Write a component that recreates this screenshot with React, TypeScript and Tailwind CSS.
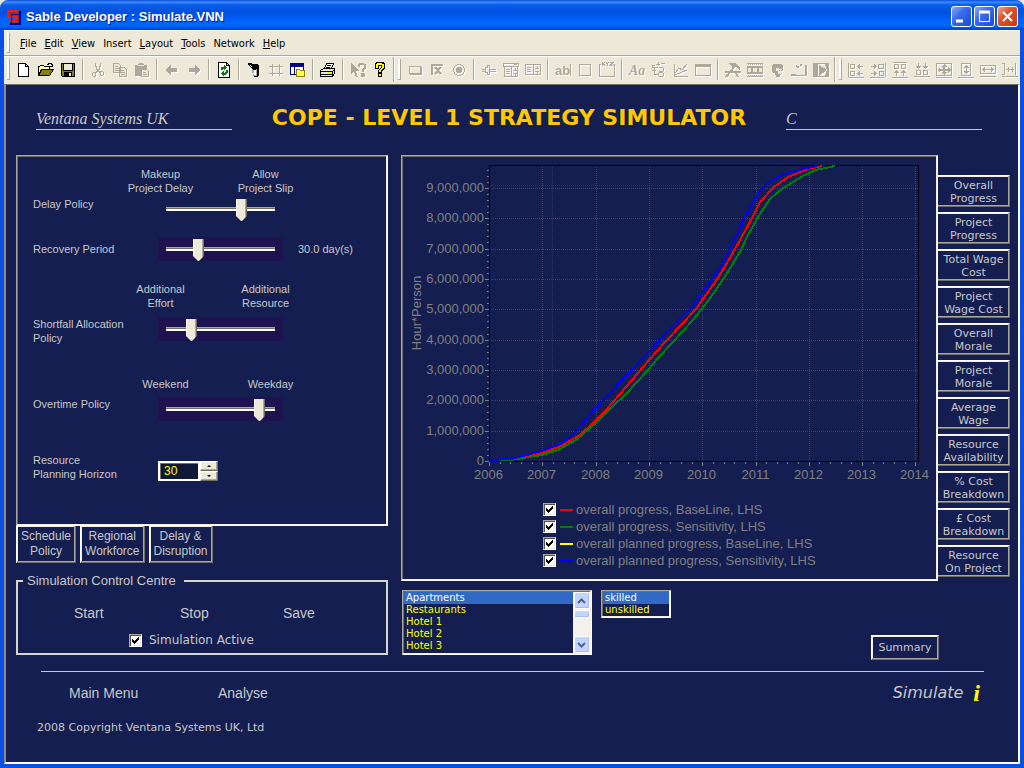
import { useState } from 'react';
import type { ReactNode } from 'react';
import clsx from 'clsx';

const SUNKEN =
  'border border-t-[#aca899] border-l-[#aca899] border-b-white border-r-white shadow-[inset_-1px_-1px_0_#f4f1e4,inset_1px_1px_0_#716f64]';
const RAISED =
  'border border-t-white border-l-white border-b-[#716f64] border-r-[#716f64] shadow-[inset_-1px_-1px_0_#aca899,inset_1px_1px_0_#f4f1e4]';

const VERDANA = "font-['DejaVu_Sans',Verdana,sans-serif]";

const menus = [
  ['', 'F', 'ile'],
  ['', 'E', 'dit'],
  ['', 'V', 'iew'],
  ['Insert', '', ''],
  ['', 'L', 'ayout'],
  ['', 'T', 'ools'],
  ['Network', '', ''],
  ['', 'H', 'elp'],
];

const sideTabs = [
  ['Overall', 'Progress'],
  ['Project', 'Progress'],
  ['Total Wage', 'Cost'],
  ['Project', 'Wage Cost'],
  ['Overall', 'Morale'],
  ['Project', 'Morale'],
  ['Average', 'Wage'],
  ['Resource', 'Availability'],
  ['% Cost', 'Breakdown'],
  ['£ Cost', 'Breakdown'],
  ['Resource', 'On Project'],
];

const G = '#aca899';

type Tool = { name: string; art: ReactNode; on?: boolean };

const fileTools: (Tool | null)[] = [
  {
    name: 'New',
    on: true,
    art: <path d="M2.5 1.5h7l3 3v10h-10zM9.5 1.5v3h3" fill="#fff" stroke="#000" />,
  },
  {
    name: 'Open',
    on: true,
    art: (
      <>
        <path d="M.5 13.5v-9h1l1-1h3l1 1h5v3" fill="#ffff9c" stroke="#000" />
        <path d="M.5 13.5l3-6h12l-4 6z" fill="#84820a" stroke="#000" />
        <path d="M9 2.5h1v-1h3v1h1v2M12 4.5h3M14.5 2v3" fill="none" stroke="#000" />
      </>
    ),
  },
  {
    name: 'Save',
    on: true,
    art: (
      <>
        <path d="M1.500 1.500h13v13h-12l-1-1z" fill="#84820a" stroke="#000" />
        <path d="M4 2h8v6H4z" fill="#ece9d8" />
        <path d="M3.500 2v6.500h9V2" fill="none" stroke="#000" />
        <path d="M4 10h8v4H4z" fill="#000" />
        <path d="M9 11h2v3H9z" fill="#ece9d8" />
      </>
    ),
  },
  null,
  {
    name: 'Cut',
    art: (
      <path
        d="M5.500 1v3l1 1v2l1 1v2M10.500 1v3l-1 1v2l-1 1v2M7.500 9.500l-2 1M8.500 9.500l2 1M3.500 10.500h2v4h-2l-1-1v-2zM10.500 9.500h2l1 1v2l-1 1h-2z"
        fill="none"
        stroke={G}
      />
    ),
  },
  {
    name: 'Copy',
    art: (
      <path
        d="M1.500 1.500h5l2 2v7h-7zM3 4.500h3M3 6.500h4M3 8.500h4M7.500 5.500h5l2 2v7h-7zM9 8.500h3M9 10.500h4M9 12.500h4"
        fill="#ece9d8"
        stroke={G}
      />
    ),
  },
  {
    name: 'Paste',
    art: (
      <>
        <path d="M1 3h3l1-2h4l1 2h3v11H1z" fill={G} />
        <path d="M4 3.500h6" stroke="#ece9d8" />
        <path d="M7.500 7.500h5l2 2v5h-7zM9 10.500h3M9 12.500h4" fill="#ece9d8" stroke={G} />
      </>
    ),
  },
  null,
  { name: 'Back', art: <path d="M1 8l6-5v3h6v4H7v3z" fill={G} /> },
  { name: 'Forward', art: <path d="M15 8L9 3v3H3v4h6v3z" fill={G} /> },
  null,
  {
    name: 'Refresh',
    on: true,
    art: (
      <>
        <path d="M2.500.5h8l3 3v12h-11zM10.500.5v3h3" fill="#fff" stroke="#000" />
        <path d="M5.500 8V6.500l1-1h2M10.500 8v2.500l-1 1h-2" fill="none" stroke="#008000" strokeWidth="2" />
        <path d="M8 3v5l3-2.500zM8 9v5l-3-2.500z" fill="#008000" />
      </>
    ),
  },
  null,
  {
    name: 'Brush',
    on: true,
    art: (
      <>
        <path d="M6 4h6v10H7l1-3H6z" fill="#aca899" />
        <path d="M8 7h2v6H8z" fill="#fff" />
        <path d="M2 1h3l1 1h6v1l1 1v10l-2 1H8v-1h3V6L9 8H8L3 4z" fill="#000" />
        <path d="M4 3h1v1h1v1H5V4H4z" fill="#fff" />
      </>
    ),
  },
  {
    name: 'Grid',
    art: <path d="M4.500 2v12M11.500 2v12M1 4.500h14M1 11.500h14" fill="none" stroke={G} />,
  },
  {
    name: 'Windows',
    on: true,
    art: (
      <>
        <path d="M.5 1.500h13v11H.5z" fill="#fff" stroke="#000084" />
        <path d="M0 1h14v4H0zM4 5h1v8H4z" fill="#000084" />
        <path d="M6.500 14.500v-7h3l1 1h4v6z" fill="#ffff4a" stroke="#84820a" />
      </>
    ),
  },
  null,
  {
    name: 'Print',
    on: true,
    art: (
      <>
        <path d="M4.500 6.500l2-5h7l-2 5z" fill="#fff" stroke="#000" />
        <path d="M.5 8.500l3-2h11v5l-2 3H.5z" fill="#ece9d8" stroke="#000" />
        <path d="M1 9.500h11.500l2-2M1 12.500h12M7 3.500h4M6 5.500h4M12.500 9v5" fill="none" stroke="#000" />
        <path d="M8 10h3v2H8z" fill="#ffef00" />
      </>
    ),
  },
  null,
  {
    name: 'Context help',
    art: (
      <>
        <path d="M1 1v11l3-2 2 5h2L6 9h3z" fill={G} />
        <path d="M9 5V3l1-1h3l2 1v3l-2 2v2M12 12h2v2h-2z" fill="none" stroke={G} strokeWidth="2" />
      </>
    ),
  },
  {
    name: 'Help',
    on: true,
    art: (
      <>
        <path d="M4 0h7l2 2v5l-3 2v2H6V8l3-2V4H7v3H3V1z" fill="#000" />
        <path d="M4 2h1V1h5v1h2v4h-1v1h-1v1H9v2H7V8h1V7h1V6h1V3H6v3H4z" fill="#ffff00" />
        <path d="M6 11h4v4H6z" fill="#000" />
        <path d="M7 12h2v2H7z" fill="#ffff00" />
      </>
    ),
  },
];

const controlTools: (Tool | null)[] = [
  {
    name: 'Button',
    art: <path d="M2.500 4.500h11v7h-11zM3 12.500h11.500V5" fill="none" stroke={G} />,
  },
  {
    name: 'Check',
    art: (
      <>
        <path d="M2 2h12v2H4v9H2z" fill={G} />
        <path d="M6 5l6 7M12 5l-6 7" stroke={G} strokeWidth="2" />
      </>
    ),
  },
  {
    name: 'Radio',
    art: (
      <>
        <circle cx="8" cy="8" r="5.500" fill="none" stroke={G} />
        <circle cx="8" cy="8" r="3" fill={G} />
      </>
    ),
  },
  null,
  {
    name: 'Slider',
    art: <path d="M1 7.500h3M1 9.500h3M9 7.500h6M9 9.500h6M4.500 5.500h2v-2h2v9h-2v-2h-2z" fill="none" stroke={G} />,
  },
  {
    name: 'Combo',
    art: (
      <path
        d="M.5 1.500h15v3H.5zM1.500 4.500v10h13v-10M8.500 4v10M3 7.500h4M3 9.500h4M3 11.500h4M10 8.500h4M10 11.500h4M12 6v3M12 10.500v3M11 2.500h3"
        fill="none"
        stroke={G}
      />
    ),
  },
  {
    name: 'List',
    art: (
      <path
        d="M.5 2.500h15v10H.5zM8.500 2v10M2 5.500h4M2 7.500h4M2 9.500h4M10 6.500h4M10 9.500h4M12 4v3M12 8.500v3"
        fill="none"
        stroke={G}
      />
    ),
  },
  null,
  {
    name: 'Edit box',
    art: (
      <>
        <text x="0" y="13" fontSize="13" fontWeight="bold" fill={G} fontFamily="Liberation Sans">
          ab
        </text>
        <path d="M15.500 2v12" stroke={G} />
      </>
    ),
  },
  { name: 'Rectangle', art: <path d="M2.500 2.500h11v11h-11z" fill="none" stroke={G} /> },
  {
    name: 'Group',
    art: (
      <>
        <path d="M2 2.500H.5v12h15v-12H14" fill="none" stroke={G} />
        <path
          d="M3 0l3 4M6 0L3 4M7 0l1.500 2L10 0M8.500 2v2M11 .5h3l-3 3h3"
          fill="none"
          stroke={G}
        />
      </>
    ),
  },
  null,
  {
    name: 'Text',
    art: (
      <text x="0" y="13" fontSize="14" fontWeight="bold" fontStyle="italic" fill={G} fontFamily="Liberation Serif">
        Aa
      </text>
    ),
  },
  {
    name: 'Model',
    art: (
      <path
        d="M5 2.500h4M7.500 0v4M10 1.500h4M3.500 3l-2 1v2M1.500 5.500h5M1 8.500h4M3.500 6v6h4M7.500 5.500h4l1 1v2l-1 1h-4M8.500 10.500h3l1 1v2l-1 1h-3l-1-1v-2z"
        fill="none"
        stroke={G}
      />
    ),
  },
  {
    name: 'Graph',
    art: <path d="M1.500 2v12.500H15M2 11l4-5 3 2 5-6M2 13l12-5" fill="none" stroke={G} />,
  },
  {
    name: 'Frame',
    art: (
      <>
        <path d="M.5 2.500h15v11H.5z" fill="none" stroke={G} />
        <path d="M0 2h16v3H0z" fill={G} />
      </>
    ),
  },
  null,
  {
    name: 'Tools',
    art: (
      <>
        <path d="M4 1h6l2 1 3 4v2l-2-1-2-2-2 1-4-3z" fill={G} />
        <path d="M9 5L2 14M0 9.500h16M10 9l3 6M3 12l-2 3" fill="none" stroke={G} strokeWidth="2" />
      </>
    ),
  },
  {
    name: 'Film',
    art: (
      <>
        <path d="M0 1h16v1H0zM0 4h16v8H0zM0 14h16v1H0z" fill={G} />
        <path d="M1 2.500h1m1 0h1m1 0h1m1 0h1m1 0h1m1 0h1m1 0h1m1 0h1M1 13.500h1m1 0h1m1 0h1m1 0h1m1 0h1m1 0h1m1 0h1m1 0h1" stroke={G} />
        <path d="M1 6h3v4H1zM6 6h4v4H6zM12 6h3v4h-3z" fill="#ece9d8" />
      </>
    ),
  },
  {
    name: 'Person',
    art: (
      <>
        <path d="M3 3l2-1h7l2 2v4l-1 1v2l-2 2v2H7l-1-4H4L3 9z" fill={G} />
        <path d="M7 6h3v1h3v3l-2 2H9V9H7z" fill="#ece9d8" />
        <path d="M10.500 8v1M12.500 8v1" stroke={G} />
      </>
    ),
  },
  {
    name: 'Path',
    art: (
      <path d="M0 12h5v2H0zM5 13h11v1H5zM14 3h2v11h-2zM5 3h1v2H5zM6 4h2v2H6zM9 2h2v2H9z" fill={G} />
    ),
  },
  {
    name: 'Play',
    art: (
      <>
        <path d="M.5 1.500h15v13H.5z" fill="none" stroke={G} />
        <path d="M1 2h4v12H1zM6 3l8 5-8 6zM12 2h3v12h-3l2-6z" fill={G} />
      </>
    ),
  },
];

const alignTools: Tool[] = [
  {
    name: 'Align left',
    art: <path d="M.5 1v14M2.500 2.500h4v4h-4zM2.500 9.500h4v4h-4zM9 4.500h6M10.500 3v3M11.500 2v5M9 11.500h6M10.500 10v3M11.500 9v5M1 15.500h15" fill="none" stroke={G} />,
  },
  {
    name: 'Align right',
    art: <path d="M15.500 1v14M8.500 2.500h5v4h-5zM9.500 9.500h4v4h-4zM1 4.500h6M5.500 3v3M4.500 2v5M1 11.500h6M5.500 10v3M4.500 9v5M0 15.500h15" fill="none" stroke={G} />,
  },
  {
    name: 'Align top',
    art: <path d="M1 .5h14M2.500 2.500h4v4h-4zM9.500 2.500h4v4h-4zM4.500 8v6M2 10.500h5M3 9.500h3M11.500 8v6M9 10.500h5M10 9.500h3M0 15.500h16" fill="none" stroke={G} />,
  },
  {
    name: 'Align bottom',
    art: <path d="M0 14.500h16M2.500 8.500h4v4h-4zM9.500 8.500h4v4h-4zM4.500 1v6M2 4.500h5M3 5.500h3M11.500 1v6M9 4.500h5M10 5.500h3" fill="none" stroke={G} />,
  },
  {
    name: 'Same size',
    art: (
      <>
        <path d="M.5 1.500h15v12H.5z" fill="none" stroke={G} />
        <path d="M8 2l3 3H9v2h3V5l3 3-3 3V9H9v1h2l-3 3-3-3h2V9H4v2L1 8l3-3v2h3V5H5z" fill={G} />
        <path d="M0 15.500h16" stroke={G} />
      </>
    ),
  },
  {
    name: 'Same height',
    art: <path d="M3.500 1.500h9v12h-9zM8.500 3v9M6 5.500h5M7 4.500h3M6 9.500h5M7 10.500h3M0 15.500h16" fill="none" stroke={G} />,
  },
  {
    name: 'Same width',
    art: <path d="M.5 3.500h15v8H.5zM2 7.500h12M4.500 5v5M3.500 6v3M11.500 5v5M12.500 6v3M0 14.500h16" fill="none" stroke={G} />,
  },
  {
    name: 'Space across',
    art: <path d="M0 1.500h2.500v11H0M4 7.500h8M6.500 5v5M10.500 5v5M13.500 1v12M0 14.500h16" fill="none" stroke={G} />,
  },
];

const ToolGroup = ({ tools }: { tools: (Tool | null)[] }) => (
  <div className="flex items-center h-full shrink-0">
    <span className="w-[3px] h-[21px] mx-[3px] border-r border-[#aca899] border-b bg-white shrink-0" />
    {tools.map((tool, i) =>
      tool ? (
        <button key={tool.name} type="button" aria-label={tool.name} className="w-[22px] h-6 grid place-items-center shrink-0">
          <svg
            viewBox="0 0 16 16"
            shapeRendering="crispEdges"
            className={clsx('w-4 h-4 overflow-visible', !tool.on && 'drop-shadow-[1px_1px_0_#fff]')}
          >
            {tool.art}
          </svg>
        </button>
      ) : (
        <span key={i} className="w-2 flex justify-center shrink-0">
          <span className="w-[2px] h-[21px] bg-[#aca899] border-r border-white" />
        </span>
      ),
    )}
  </div>
);

const TickBox = ({ id }: { id: string }) => {
  const [checked, setChecked] = useState(true);
  return (
    <span className="relative w-[13px] h-[13px] shrink-0">
      <input
        id={id}
        type="checkbox"
        checked={checked}
        onChange={(e) => setChecked(e.target.checked)}
        className="peer appearance-none block w-[13px] h-[13px] bg-white border border-t-[#aca899] border-l-[#aca899] border-b-white border-r-white shadow-[inset_1px_1px_0_#55534a,inset_-1px_-1px_0_#ece9d8]"
      />
      <svg
        viewBox="0 0 13 13"
        shapeRendering="crispEdges"
        className="absolute inset-0 w-[13px] h-[13px] pointer-events-none hidden peer-checked:block"
      >
        <path d="M3 5h1v1h1v1h1v-1h1v-1h1v-1h1v-1h1v3h-1v1h-1v1h-1v1h-1v1h-1v-1h-1v-1h-1z" fill="#000" />
      </svg>
    </span>
  );
};

const Slider = ({ label, start, plain }: { label: string; start: number; plain?: boolean }) => {
  const [value, setValue] = useState(start);
  return (
    <div className={clsx('w-[125px] h-6 px-2', !plain && 'bg-[#1f1250]')}>
      <input
        type="range"
        aria-label={label}
        min={0}
        max={98}
        value={value}
        onChange={(e) => setValue(Number(e.target.value))}
        className="appearance-none block w-full h-6 bg-transparent [&::-webkit-slider-runnable-track]:h-1 [&::-webkit-slider-runnable-track]:bg-[linear-gradient(#aca899_0_1px,#716f64_1px_2px,#ffffff_2px_4px)] [&::-webkit-slider-thumb]:appearance-none [&::-webkit-slider-thumb]:w-[11px] [&::-webkit-slider-thumb]:h-[22px] [&::-webkit-slider-thumb]:-mt-2 [&::-webkit-slider-thumb]:bg-[linear-gradient(90deg,#ffffff_0_1px,#ece9d8_1px_9px,#aca899_9px_10px,#716f64_10px_11px)] [&::-webkit-slider-thumb]:[clip-path:polygon(0_0,100%_0,100%_17px,6px_100%,5px_100%,0_17px)]"
      />
    </div>
  );
};

const Captions = ({ left, right, className }: { left: ReactNode; right: ReactNode; className?: string }) => (
  <div className={clsx('flex text-center', className)}>
    <span className="w-[105px]">{left}</span>
    <span className="w-[105px]">{right}</span>
  </div>
);

const PolicyPanel = () => {
  const [horizon, setHorizon] = useState(30);
  const row = 'grid grid-cols-[125px_125px_1fr]';
  return (
    <section className={clsx('px-4 pt-[11px] pb-11 text-[11px] leading-[14px]', SUNKEN)}>
      <Captions className="ml-[75px]" left={<>Makeup<br />Project Delay</>} right={<>Allow<br />Project Slip</>} />
      <div className={clsx(row, 'mt-0.5 items-start')}>
        <span>Delay Policy</span>
        <Slider label="Delay Policy" start={70} plain />
      </div>
      <div className={clsx(row, 'mt-4 items-center')}>
        <span>Recovery Period</span>
        <Slider label="Recovery Period" start={27} />
        <span className="pl-[15px]">30.0 day(s)</span>
      </div>
      <Captions className="ml-[75px] mt-[21px]" left={<>Additional<br />Effort</>} right={<>Additional<br />Resource</>} />
      <div className={clsx(row, 'mt-[7px] items-start')}>
        <span>Shortfall Allocation<br />Policy</span>
        <Slider label="Shortfall Allocation Policy" start={20} />
      </div>
      <Captions className="ml-20 mt-8" left="Weekend" right="Weekday" />
      <div className={clsx(row, 'mt-1.5 items-start')}>
        <span>Overtime Policy</span>
        <Slider label="Overtime Policy" start={88} />
      </div>
      <div className={clsx(row, 'mt-8 items-end')}>
        <label htmlFor="horizon">Resource<br />Planning Horizon</label>
        <div className="flex h-5">
          <input
            id="horizon"
            value={horizon}
            onChange={(e) => setHorizon(Number(e.target.value) || 0)}
            className="w-[42px] h-5 pl-1 text-xs text-[#ffff00] bg-[#101838] border-2 border-white shadow-[inset_1px_1px_0_#716f64] outline-none"
          />
          <div className="flex flex-col w-[18px]">
            <button type="button" aria-label="More" onClick={() => setHorizon(horizon + 1)} className={clsx('flex-1 bg-[#ece9d8] grid place-items-center', RAISED)}>
              <svg viewBox="0 0 4 2" className="w-1 h-[2px]"><path d="M0 2h4L2 0z" /></svg>
            </button>
            <button type="button" aria-label="Less" onClick={() => setHorizon(horizon - 1)} className={clsx('flex-1 bg-[#ece9d8] grid place-items-center', RAISED)}>
              <svg viewBox="0 0 4 2" className="w-1 h-[2px]"><path d="M0 0h4L2 2z" /></svg>
            </button>
          </div>
        </div>
      </div>
    </section>
  );
};

// plot area of the chart, in the svg's own units
const X0 = 86;
const X1 = 515;
const Y0 = 304;
const Y1 = 8;
const YEAR = 53.3;
const MILLION = 30.35;

const series = [
  {
    color: '#008000',
    points:
      '87,303 107,303 139,298 157,292 173,283 193,266 208,251 223,237 245,213 255,201 270,185 290,163 305,144 315,130 326,113 337,95 345,78 357,57 367,42 380,31 400,19 413,13 432,9',
  },
  {
    color: '#ff0000',
    points:
      '87,303 107,302 139,296 158,289 177,278 193,263 203,253 223,230 246,203 263,184 279,167 293,152 300,142 315,121 328,99 342,74 350,59 357,45 371,30 385,20 405,12 419,9',
  },
  {
    color: '#0000ff',
    points:
      '87,303 108,302 139,294 157,287 167,280 177,270 192,252 220,222 246,195 262,177 278,161 290,149 299,136 316,113 327,91 335,75 342,60 357,34 367,24 382,17 400,12 414,9',
  },
];

const legend = [
  { color: 'bg-[#ff0000]', text: 'overall progress, BaseLine, LHS' },
  { color: 'bg-[#008000]', text: 'overall progress, Sensitivity, LHS' },
  { color: 'bg-[#ffff00]', text: 'overall planned progress, BaseLine, LHS' },
  { color: 'bg-[#0000ff]', text: 'overall planned progress, Sensitivity, LHS' },
];

const Chart = () => {
  const yTicks = Array.from({ length: 10 }, (_, i) => i);
  const xTicks = Array.from({ length: 9 }, (_, i) => i);
  const xAt = (n: number) => Math.round(X0 + n * YEAR) + 0.5;
  const yAt = (n: number) => Math.round(Y0 - n * MILLION) + 0.5;
  return (
    <section className={clsx('flex-1 p-px', SUNKEN)}>
      <svg viewBox="0 0 533 344" className="block w-full" fontSize="13" fill="#808080" fontFamily="Liberation Sans">
        <g stroke="#2c40b0" strokeDasharray="1 1" shapeRendering="crispEdges">
          {xTicks.slice(1).map((n) => (
            <path key={n} d={`M${xAt(n)} ${Y1}V${Y0}`} />
          ))}
          {yTicks.slice(1).map((n) => (
            <path key={n} d={`M${X0} ${yAt(n)}H${X1}`} />
          ))}
          <path d={`M149.500 ${Y1}V${Y0}M${X0} 28.500H${X1}`} opacity="0.6" />
        </g>
        <g stroke="#808080" shapeRendering="crispEdges">
          {yTicks.map((n) => (
            <path key={n} d={`M${X0 - 4} ${yAt(n)}H${X0}`} />
          ))}
          {Array.from({ length: 49 }, (_, i) => (
            <path key={i} d={`M${X0 - 2} ${yAt(i / 5)}H${X0}`} />
          ))}
          {xTicks.map((n) => (
            <path key={n} d={`M${xAt(n)} ${Y0}V${Y0 + 5}`} />
          ))}
          {Array.from({ length: 41 }, (_, i) => (
            <path key={i} d={`M${xAt(i / 5)} ${Y0}V${Y0 + 3}`} />
          ))}
        </g>
        <path d={`M${X0}.5 ${Y1}.5H${X1}.5V${Y0}.5H${X0}.5z`} fill="none" stroke="#000" shapeRendering="crispEdges" />
        {series.map((s) => (
          <polyline key={s.color} points={s.points} fill="none" stroke={s.color} strokeWidth="2" shapeRendering="crispEdges" />
        ))}
        {yTicks.map((n) => (
          <text key={n} x={X0 - 5} y={yAt(n) + 3} textAnchor="end">
            {n ? `${n},000,000` : '0'}
          </text>
        ))}
        {xTicks.map((n) => (
          <text key={n} x={xAt(n) - 1} y={Y0 + 18} textAnchor="middle">
            {2006 + n}
          </text>
        ))}
        <text transform="translate(18 156) rotate(-90)" textAnchor="middle">
          Hour*Person
        </text>
      </svg>
      <ul className="pl-[140px] pb-[10px] text-[13px] leading-[17px] text-[#808080]">
        {legend.map((l, i) => (
          <li key={l.text} className="flex items-center h-[17px]">
            <TickBox id={`series-${i}`} />
            <span className={clsx('w-[13px] h-[2px] ml-1 mr-[3px]', l.color)} />
            <label htmlFor={`series-${i}`} className="whitespace-nowrap">{l.text}</label>
          </li>
        ))}
      </ul>
    </section>
  );
};

const listStyle =
  'block appearance-none outline-none overflow-hidden bg-transparent text-[10px] leading-3 text-[#ffff00] [&::-webkit-scrollbar]:hidden [&>option]:p-0 [&>option]:pl-0.5 [&>option]:min-h-0 [&>option]:h-3 [&>option]:leading-3 [&>option:checked]:bg-[linear-gradient(#316ac5,#316ac5)] [&>option:checked]:[-webkit-text-fill-color:#ffffff]';

const ScrollButton = ({ label, d }: { label: string; d: string }) => (
  <button
    type="button"
    aria-label={label}
    className="w-4 h-[17px] rounded-xs border border-white bg-[#c3d5fd] grid place-items-center shadow-[inset_-1px_-1px_0_#a5bdf0]"
  >
    <svg viewBox="0 0 9 6" className="w-[9px] h-1.5" fill="none" stroke="#4d6185" strokeWidth="2">
      <path d={d} />
    </svg>
  </button>
);

const Lists = () => (
  <div className={clsx('flex items-start mt-[9px] ml-px mr-[71px]', VERDANA)}>
    <div className={clsx('flex w-[190px] h-[65px] p-px', SUNKEN)}>
      <select size={5} defaultValue="Apartments" aria-label="Building" className={clsx('flex-1 h-[61px]', listStyle)}>
        <option>Apartments</option>
        <option>Restaurants</option>
        <option>Hotel 1</option>
        <option>Hotel 2</option>
        <option>Hotel 3</option>
      </select>
      <div className="w-[17px] bg-[#f3f1ec] flex flex-col items-center">
        <ScrollButton label="Scroll up" d="M1 5l3.500-3.500L8 5" />
        <span className="w-4 h-2 mt-px rounded-xs border border-white bg-[#c3d5fd] shadow-[inset_-1px_-1px_0_#a5bdf0]" />
        <span className="flex-1" />
        <ScrollButton label="Scroll down" d="M1 1l3.500 3.500L8 1" />
      </div>
    </div>
    <div className={clsx('w-[70px] h-7 p-px ml-[9px]', SUNKEN)}>
      <select size={2} defaultValue="skilled" aria-label="Skill" className={clsx('w-full h-6', listStyle)}>
        <option>skilled</option>
        <option>unskilled</option>
      </select>
    </div>
    <button type="button" className={clsx('ml-auto mt-[45px] w-[68px] h-[25px] pt-0.5 text-[11px]', RAISED)}>
      Summary
    </button>
  </div>
);

const WindowButton = ({ label, red, children }: { label: string; red?: boolean; children: ReactNode }) => (
  <button
    type="button"
    aria-label={label}
    className={clsx(
      'w-[21px] h-[21px] rounded-[3px] border border-white',
      red
        ? 'bg-[linear-gradient(135deg,#f0a58c,#e0512c_40%,#c23a12)]'
        : 'bg-[linear-gradient(135deg,#8aaaf5,#3a6bea_40%,#1c4cd0)]',
    )}
  >
    <svg viewBox="0 0 19 19" className="block w-full h-full" fill="none" stroke="#fff">
      {children}
    </svg>
  </button>
);

const App = () => {
  return (
    <div className="bg-[#ece9d8] min-h-screen flex flex-col font-['Liberation_Sans',Arial,sans-serif] cursor-default">
      <header className="h-[30px] rounded-t-lg bg-[linear-gradient(#0b48d8_0px,#3a8cff_2px,#0a5ce8_5px,#0050e0_12px,#0060fc_20px,#0066ff_26px,#0040c8_30px)] flex items-center pt-[3px] px-1.5">
        <svg viewBox="0 0 16 16" className="w-4 h-4" shapeRendering="crispEdges">
          <path d="M1 1h12v3H5v2h9v8H3v-3h7V9H1z" fill="#7a3a3a" />
          <path d="M1 1h11v2H3v4h8v6H3v-2h6V9H1z" fill="#ff1414" />
          <path d="M5.500 5.500h9v9h-9z" fill="none" stroke="#1010b8" />
          <path d="M14 2v12M4 14.500h11" fill="none" stroke="#0000a0" strokeWidth="2" />
        </svg>
        <h1 className="ml-1 text-[13px] font-bold text-white [text-shadow:1px_1px_0_#0a1883]">
          Sable Developer : Simulate.VNN
        </h1>
        <div className="ml-auto flex gap-0.5">
          <WindowButton label="Minimise">
            <path d="M4 14h7" strokeWidth="3" />
          </WindowButton>
          <WindowButton label="Maximise">
            <path d="M4.500 5.500h10v9h-10z" />
            <path d="M4 5h11" strokeWidth="3" />
          </WindowButton>
          <WindowButton label="Close" red>
            <path d="M5 5l9 9M14 5l-9 9" strokeWidth="2" />
          </WindowButton>
        </div>
      </header>

      <div className="flex-1 flex flex-col border-4 border-t-0 border-[#0a50e8]">
        <nav className="h-[26px] border-t border-white border-b border-b-[#aca899] flex items-center font-['DejaVu_Sans_Condensed','DejaVu_Sans',Tahoma,sans-serif] text-[11px] text-black">
          <span className="w-[3px] h-5 ml-[3px] mr-[10px] border-r border-b border-[#aca899] bg-white" />
          <div className="flex gap-2 pt-0.5">
            {menus.map(([pre, key, rest]) => (
              <button key={pre + key} type="button">
                {pre}
                <span className="underline">{key}</span>
                {rest}
              </button>
            ))}
          </div>
        </nav>
        <div className="h-[28px] border-t border-white pb-0.5 flex items-center overflow-hidden">
          <ToolGroup tools={fileTools} />
          <span className="w-[2px] h-full ml-0.5 bg-[#aca899] border-r border-white shrink-0" />
          <ToolGroup tools={controlTools} />
          <span className="w-[2px] h-full ml-0.5 bg-[#aca899] border-r border-white shrink-0" />
          <ToolGroup tools={alignTools} />
        </div>

        <main className="flex-1 border-2 border-t-[#716f64] border-t border-l-[#8f8b7d] border-b-white border-r-white bg-[#141e50] text-[#c8c8c8] pl-[10px] pr-2">
          <div className="flex items-end justify-between pt-[21px] pb-[25px] pl-5 pr-7">
            <div className="w-[196px] border-b border-[#c0c8e0] font-['Liberation_Serif',serif] italic text-base leading-5">
              Ventana Systems UK
            </div>
            <h2 className={clsx('text-[22px] leading-6 font-bold text-[#ffc800] whitespace-nowrap', VERDANA)}>
              COPE - LEVEL 1 STRATEGY SIMULATOR
            </h2>
            <div className="w-[196px] border-b border-[#c0c8e0] font-['Liberation_Serif',serif] italic text-base leading-5">
              C
            </div>
          </div>

          <div className="flex items-start gap-[13px]">
            <div className="w-[372px] shrink-0">
              <PolicyPanel />
              <div className="flex gap-1 text-xs leading-[15px]">
                {[
                  ['Schedule', 'Policy'],
                  ['Regional', 'Workforce'],
                  ['Delay &', 'Disruption'],
                ].map(([a, b]) => (
                  <button key={a} type="button" className={clsx('px-1 pt-[3px] pb-[3px] border-t-0', RAISED)}>
                    {a}
                    <br />
                    {b}
                  </button>
                ))}
              </div>
              <fieldset className="mt-[10px] border-2 border-[#d8d6cc] pb-[5px]">
                <legend className="ml-[5px] pl-1 pr-2 text-[13px] leading-4">Simulation Control Centre</legend>
                <div className="grid grid-cols-[106px_103px_auto] pl-14 mt-[15px] text-sm leading-[18px]">
                  <button type="button" className="text-left">Start</button>
                  <button type="button" className="text-left">Stop</button>
                  <button type="button" className="text-left">Save</button>
                </div>
                <div className={clsx('flex items-center gap-[7px] mt-[10px] pl-[111px] text-xs leading-4', VERDANA)}>
                  <TickBox id="active" />
                  <label htmlFor="active">Simulation Active</label>
                </div>
              </fieldset>
            </div>

            <div className="flex-1 min-w-0">
              <div className="flex items-start">
                <Chart />
                <div className={clsx('w-[72px] pt-5 flex flex-col gap-[5px] text-[11px] leading-[13px]', VERDANA)}>
                  {sideTabs.map(([a, b], i) => (
                    <button
                      key={i}
                      type="button"
                      className="h-8 pt-0.5 border border-l-0 border-t-white border-r-[#716f64] border-b-[#716f64] shadow-[inset_-1px_-1px_0_#aca899,inset_0_1px_0_#f4f1e4] whitespace-nowrap"
                    >
                      {a}
                      <br />
                      {b}
                    </button>
                  ))}
                </div>
              </div>
              <Lists />
            </div>
          </div>

          <footer className="mt-[11px] ml-[25px] mr-[26px] border-t border-[#c0c8e0]">
            <div className="flex items-center pt-[9px] pl-7 pr-1 text-sm leading-6">
              <button type="button" className="w-[149px] text-left">Main Menu</button>
              <button type="button">Analyse</button>
              <span className={clsx('ml-auto text-base leading-6 italic', VERDANA)}>Simulate</span>
              <button type="button" aria-label="Information" className="ml-2.5 font-['Liberation_Serif',serif] text-2xl leading-6 font-bold italic text-[#ffff00]">
                i
              </button>
            </div>
            <p className={clsx('-ml-1 mt-4 text-[11px] leading-[14px]', VERDANA)}>
              2008 Copyright Ventana Systems UK, Ltd
            </p>
          </footer>
        </main>
      </div>
    </div>
  );
};

export default App;
